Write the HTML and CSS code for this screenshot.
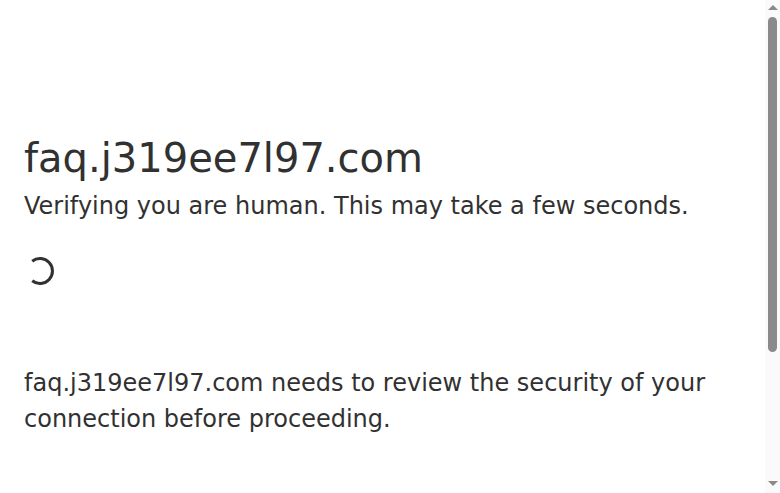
FILE: index.html
```html
<!DOCTYPE html>
<html lang="en">
<head>
<meta charset="utf-8">
<title>Just a moment...</title>
<link rel="stylesheet" href="styles.css">
</head>
<body>
<div class="main-wrapper">
  <div class="main-content">
    <h1 class="h1">faq.j319ee7l97.com</h1>
    <h2 class="h2">Verifying you are human. This may take a few seconds.</h2>
    <div class="spinner">
      <svg width="32" height="32" viewBox="0 0 32 32"><path d="M8.2 6.2 A12.5 12.5 0 1 1 8.2 25.8" fill="none" stroke="#313131" stroke-width="3"/></svg>
    </div>
    <div class="body-text">faq.j319ee7l97.com needs to review the security of your connection before proceeding.</div>
  </div>
</div>
<div class="scrollbar" aria-hidden="true">
  <span class="arrow up"></span>
  <span class="thumb"></span>
  <span class="arrow down"></span>
</div>
</body>
</html>
```
FILE: styles.css
```css
html, body {
  margin: 0;
  padding: 0;
  background: #fff;
  overflow: hidden;
}
body {
  font-family: "DejaVu Sans", sans-serif;
  color: #313131;
}
.main-content {
  margin: 128px auto 0;
  padding-left: 24px;
  padding-right: 39px;
}
.h1 {
  font-size: 40px;
  font-weight: 500;
  line-height: 60px;
  margin: 0;
}
.h2 {
  font-size: 24px;
  font-weight: 500;
  line-height: 36px;
  margin: 0;
}
.spinner {
  height: 32px;
  margin: 31px 0 0;
  display: flex;
}
.body-text {
  margin-top: 78px;
  font-size: 24px;
  line-height: 36px;
}
.scrollbar {
  position: fixed;
  top: 0;
  right: 0;
  width: 15px;
  height: 493px;
  background: #fafafa;
  display: flex;
  flex-direction: column;
  align-items: center;
}
.arrow {
  width: 0;
  height: 0;
  border-left: 5px solid transparent;
  border-right: 5px solid transparent;
}
.arrow.up {
  margin-top: 5px;
  border-bottom: 5px solid #8a8a8a;
}
.thumb {
  margin-top: 7px;
  width: 9px;
  height: 335px;
  border-radius: 5px;
  background: #8a8a8a;
}
.arrow.down {
  margin-top: auto;
  margin-bottom: 7px;
  border-top: 5px solid #8a8a8a;
}
```
